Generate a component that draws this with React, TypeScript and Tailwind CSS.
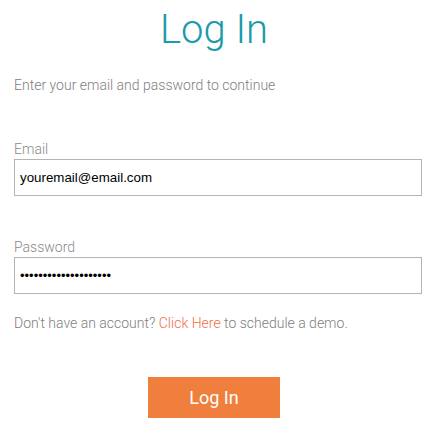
export default function App() {
  return (
    <div className="min-h-screen bg-white px-[14px] pt-[6px] font-['Roboto',sans-serif]">
      <h1 className="w-[400px] text-center text-[40px] font-light leading-[48px] text-[#1b9aaa]">Log In</h1>
      <p className="mt-[23px] text-[14px] font-light leading-[16px] text-[#808080]">
        Enter your email and password to continue
      </p>

      <form className="mt-[48px] flex flex-col" onSubmit={(e) => e.preventDefault()}>
        <label className="text-[14px] font-light leading-[16px] text-[#8a8a8a]">Email</label>
        <input
          type="text"
          defaultValue="youremail@email.com"
          className="mt-[2px] h-[37px] w-[408px] border border-[#b4b4b4] px-[5px] font-['Liberation_Sans',Arial,sans-serif] text-[13.33px] text-black outline-none"
        />

        <label className="mt-[43px] text-[14px] font-light leading-[16px] text-[#8a8a8a]">Password</label>
        <input
          type="password"
          defaultValue="12345678901234567890"
          className="mt-[2px] h-[37px] w-[408px] border border-[#b4b4b4] px-[5px] font-['Liberation_Sans',Arial,sans-serif] text-[13px] text-black outline-none"
        />

        <p className="mt-[21px] text-[14px] font-light leading-[16px] text-[#808080]">
          Don't have an account? <a className="text-[#f26d4a]">Click Here</a> to schedule a demo.
        </p>

        <div className="mt-[46px] flex w-[400px] justify-center">
          <button
            type="submit"
            className="h-[41px] w-[132px] bg-[#f07f3e] text-[18px] leading-[41px] text-white"
          >
            Log In
          </button>
        </div>
      </form>
    </div>
  );
}
